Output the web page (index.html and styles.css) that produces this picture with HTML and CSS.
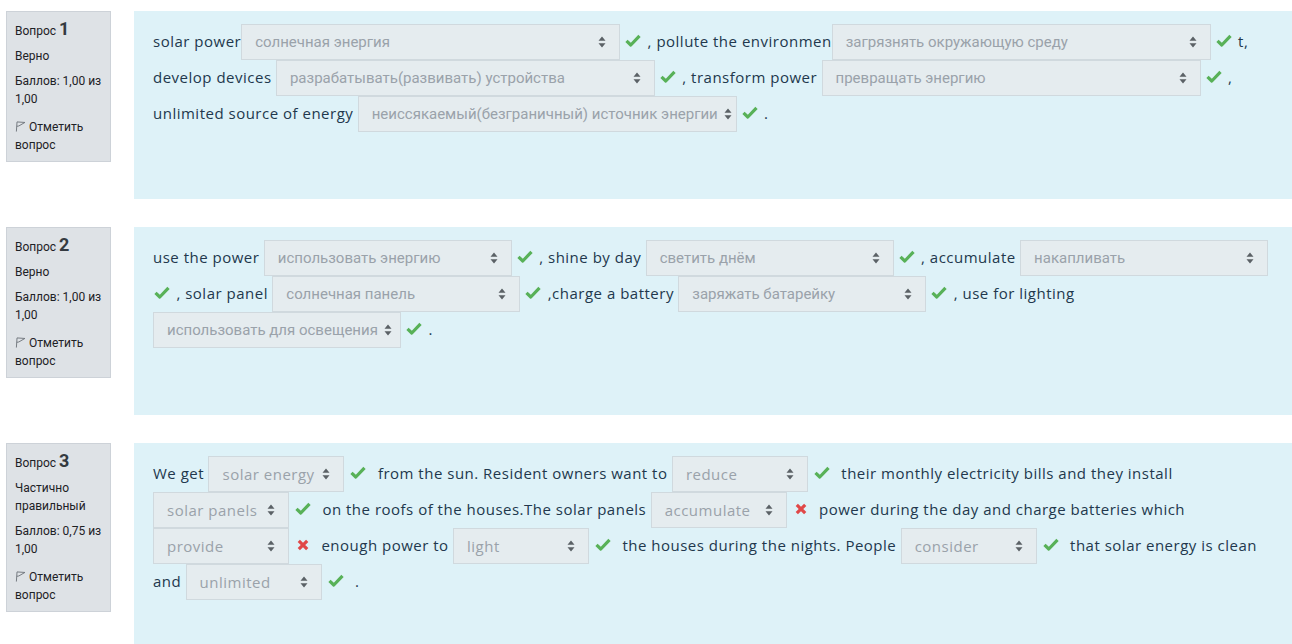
FILE: index.html
```html
<!DOCTYPE html>
<html lang="ru">
<head>
<meta charset="utf-8">
<title>Тест</title>
<link rel="stylesheet" href="styles.css">
</head>
<body>
<svg width="0" height="0" class="defs">
  <defs>
    <symbol id="arr" viewBox="0 0 8 12"><path d="M4 0.5 L7.5 4.8 H0.5 Z M4 11.5 L7.5 7.2 H0.5 Z" fill="#5b6166"/></symbol>
    <symbol id="chk" viewBox="0 0 16 13"><path d="M1.5 6.8 L5.8 11 L14.5 1.8" fill="none" stroke="#58b158" stroke-width="3.2" stroke-linejoin="round"/></symbol>
    <symbol id="crs" viewBox="0 0 12 12"><path d="M1.8 1.8 L10.2 10.2 M10.2 1.8 L1.8 10.2" fill="none" stroke="#e04848" stroke-width="3.2"/></symbol>
    <symbol id="flag" viewBox="0 0 12 12"><path d="M1.5 11.5 L2.2 1 L10.8 1.6 L4.2 5.4 L2 5.8" fill="none" stroke="#6c7278" stroke-width="1"/></symbol>
  </defs>
</svg>

<div class="que">
  <div class="info">
    <h3 class="no">Вопрос <span class="qno">1</span></h3>
    <div class="state">Верно</div>
    <div class="grade">Баллов: 1,00 из 1,00</div>
    <div class="flag"><svg class="flagicon"><use href="#flag"/></svg> Отметить вопрос</div>
  </div>
  <div class="content">
    <div class="line">solar power<span class="sel w378"><span class="val">солнечная энергия</span><svg class="arr"><use href="#arr"/></svg></span><svg class="ok"><use href="#chk"/></svg> , pollute the environmen<span class="sel w378"><span class="val">загрязнять окружающую среду</span><svg class="arr"><use href="#arr"/></svg></span><svg class="ok"><use href="#chk"/></svg> t,</div>
    <div class="line">develop devices <span class="sel w378"><span class="val">разрабатывать(развивать) устройства</span><svg class="arr"><use href="#arr"/></svg></span><svg class="ok"><use href="#chk"/></svg> , transform power <span class="sel w378"><span class="val">превращать энергию</span><svg class="arr"><use href="#arr"/></svg></span><svg class="ok"><use href="#chk"/></svg> ,</div>
    <div class="line">unlimited source of energy <span class="sel w378"><span class="val">неиссякаемый(безграничный) источник энергии</span><svg class="arr"><use href="#arr"/></svg></span><svg class="ok"><use href="#chk"/></svg> .</div>
  </div>
</div>

<div class="que">
  <div class="info">
    <h3 class="no">Вопрос <span class="qno">2</span></h3>
    <div class="state">Верно</div>
    <div class="grade">Баллов: 1,00 из 1,00</div>
    <div class="flag"><svg class="flagicon"><use href="#flag"/></svg> Отметить вопрос</div>
  </div>
  <div class="content">
    <div class="line">use the power <span class="sel w247"><span class="val">использовать энергию</span><svg class="arr"><use href="#arr"/></svg></span><svg class="ok"><use href="#chk"/></svg> , shine by day <span class="sel w247"><span class="val">светить днём</span><svg class="arr"><use href="#arr"/></svg></span><svg class="ok"><use href="#chk"/></svg> , accumulate <span class="sel w247"><span class="val">накапливать</span><svg class="arr"><use href="#arr"/></svg></span></div>
    <div class="line"><svg class="ok first"><use href="#chk"/></svg> , solar panel <span class="sel w247"><span class="val">солнечная панель</span><svg class="arr"><use href="#arr"/></svg></span><svg class="ok"><use href="#chk"/></svg> ,charge a battery <span class="sel w247"><span class="val">заряжать батарейку</span><svg class="arr"><use href="#arr"/></svg></span><svg class="ok"><use href="#chk"/></svg> , use for lighting</div>
    <div class="line"><span class="sel w247"><span class="val">использовать для освещения</span><svg class="arr"><use href="#arr"/></svg></span><svg class="ok"><use href="#chk"/></svg> .</div>
  </div>
</div>

<div class="que">
  <div class="info">
    <h3 class="no">Вопрос <span class="qno">3</span></h3>
    <div class="state">Частично правильный</div>
    <div class="grade">Баллов: 0,75 из 1,00</div>
    <div class="flag"><svg class="flagicon"><use href="#flag"/></svg> Отметить вопрос</div>
  </div>
  <div class="content tall">
    <div class="line">We get <span class="sel w135 lat"><span class="val">solar energy</span><svg class="arr"><use href="#arr"/></svg></span><svg class="ok wide"><use href="#chk"/></svg> from the sun. Resident owners want to <span class="sel w135 lat"><span class="val">reduce</span><svg class="arr"><use href="#arr"/></svg></span><svg class="ok wide"><use href="#chk"/></svg> their monthly electricity bills and they install</div>
    <div class="line"><span class="sel w135 lat"><span class="val">solar panels</span><svg class="arr"><use href="#arr"/></svg></span><svg class="ok wide"><use href="#chk"/></svg> on the roofs of the houses.The solar panels <span class="sel w135 lat"><span class="val">accumulate</span><svg class="arr"><use href="#arr"/></svg></span><svg class="bad"><use href="#crs"/></svg> power during the day and charge batteries which</div>
    <div class="line"><span class="sel w135 lat"><span class="val">provide</span><svg class="arr"><use href="#arr"/></svg></span><svg class="bad"><use href="#crs"/></svg> enough power to <span class="sel w135 lat"><span class="val">light</span><svg class="arr"><use href="#arr"/></svg></span><svg class="ok wide"><use href="#chk"/></svg> the houses during the nights. People <span class="sel w135 lat"><span class="val">consider</span><svg class="arr"><use href="#arr"/></svg></span><svg class="ok wide"><use href="#chk"/></svg> that solar energy is clean</div>
    <div class="line">and <span class="sel w135 lat"><span class="val">unlimited</span><svg class="arr"><use href="#arr"/></svg></span><svg class="ok wide"><use href="#chk"/></svg> .</div>
  </div>
</div>
</body>
</html>
```

FILE: styles.css
```css
html, body {
  margin: 0;
  padding: 0;
  background: #ffffff;
}
body {
  padding-top: 11px;
  font-family: "Open Sans", "Noto Sans", sans-serif;
}
.defs {
  position: absolute;
  width: 0;
  height: 0;
}
.que {
  display: flex;
  align-items: flex-start;
  margin: 0 0 28px 6px;
}
.info {
  width: 105px;
  box-sizing: border-box;
  flex: none;
  background: #dee2e6;
  border: 1px solid #cdd2d8;
  padding: 6px 8px 7px 8px;
  font-family: Roboto, "Liberation Sans", sans-serif;
  font-size: 12px;
  color: #1d2125;
  line-height: 18px;
}
.no {
  margin: 0 0 5px 0;
  font-size: 12px;
  font-weight: normal;
  line-height: 22px;
}
.qno {
  font-size: 18px;
  font-weight: bold;
  color: #343a40;
}
.state {
  margin-bottom: 7px;
}
.grade {
  margin-bottom: 10px;
}
.flagicon {
  width: 11px;
  height: 11px;
  vertical-align: -1px;
}
.content {
  flex: 1;
  margin-left: 23px;
  min-height: 188px;
  box-sizing: border-box;
  padding: 13px 20px 0 19px;
  background: #def2f8;
  color: #22384d;
  font-size: 15px;
  letter-spacing: 0.5px;
}
.content.tall {
  min-height: 210px;
}
.line {
  height: 36px;
  line-height: 35px;
  white-space: nowrap;
}
.sel {
  display: inline-flex;
  align-items: center;
  justify-content: space-between;
  vertical-align: top;
  box-sizing: border-box;
  height: 36px;
  padding: 0 13px 0 13px;
  background: #e5ecef;
  border: 1px solid #d0d9de;
  color: #9aa2aa;
  font-family: Roboto, "Liberation Sans", sans-serif;
  font-size: 15px;
  letter-spacing: 0;
  line-height: 33px;
}
.sel.lat {
  font-family: "Open Sans", "Noto Sans", sans-serif;
  letter-spacing: 0.5px;
}
.w378 { width: 379px; }
.w247 { width: 248px; }
.w135 { width: 136px; }
.arr {
  width: 8px;
  height: 12px;
  flex: none;
  margin-left: 6px;
}
.ok {
  width: 16px;
  height: 13px;
  margin: 0 2px 0 5px;
  vertical-align: 0;
}
.ok.first {
  margin-left: 1px;
}
.ok.wide {
  margin: 0 7px 0 6px;
}
.bad {
  width: 12px;
  height: 12px;
  margin: 0 8px 0 8px;
  vertical-align: 0;
}
```
